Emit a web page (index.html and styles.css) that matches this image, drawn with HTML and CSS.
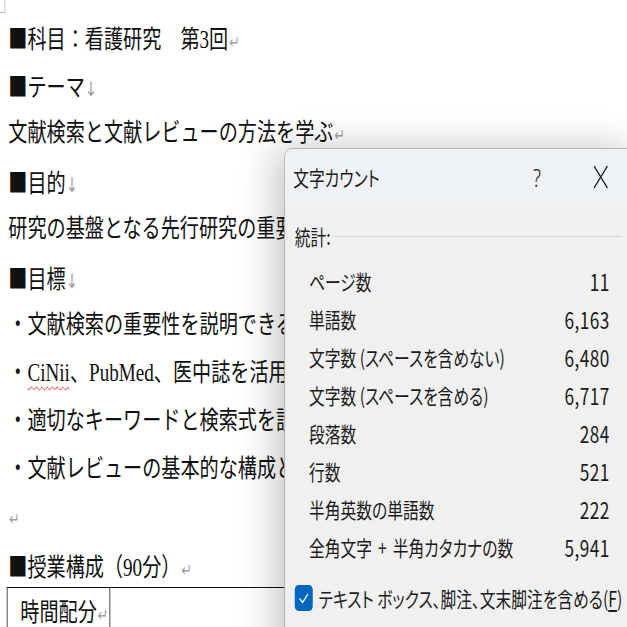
FILE: index.html
```html
<!DOCTYPE html>
<html lang="ja">
<head>
<meta charset="utf-8">
<title>文字カウント</title>
<link rel="stylesheet" href="styles.css">
</head>
<body>
<div class="stage">
  <div class="doc">
    <div class="corner"></div>
    <p class="line"><span class="sq">■</span>科目：看護研究　第<span class="lat">3</span>回<span class="ret">↵</span></p>
    <p class="line"><span class="sq">■</span>テーマ<span class="brk">↓</span></p>
    <p class="line">文献検索と文献レビューの方法を学ぶ<span class="ret">↵</span></p>
    <p class="line"><span class="sq">■</span>目的<span class="brk">↓</span></p>
    <p class="line">研究の基盤となる先行研究の重要性を理解し、文献検索の方法を学ぶ<span class="ret">↵</span></p>
    <p class="line"><span class="sq">■</span>目標<span class="brk">↓</span></p>
    <p class="line">・文献検索の重要性を説明できる<span class="ret">↵</span></p>
    <p class="line">・<span class="lat spell">CiNii</span>、<span class="lat">PubMed</span>、医中誌を活用して文献を検索できる<span class="ret">↵</span></p>
    <p class="line">・適切なキーワードと検索式を設定できる<span class="ret">↵</span></p>
    <p class="line">・文献レビューの基本的な構成と書き方を理解する<span class="ret">↵</span></p>
    <p class="line"><span class="ret">↵</span></p>
    <p class="line"><span class="sq">■</span>授業構成（<span class="lat">90</span>分）<span class="ret">↵</span></p>
    <table class="tbl">
      <tr><td class="c1">時間配分<span class="ret">↵</span></td><td class="c2"></td></tr>
    </table>
  </div>

  <div class="dialog">
    <div class="titlebar">
      <span class="title">文字カウント</span>
      <span class="btn help">?</span>
      <span class="btn close">
        <svg width="20" height="24" viewBox="0 0 20 24"><path d="M1 1 L19 23 M19 1 L1 23" stroke="#1b1b1b" stroke-width="1.5" fill="none"/></svg>
      </span>
    </div>
    <div class="body">
      <div class="stat-head"><span>統計:</span><span class="rule"></span></div>
      <div class="rows">
        <div class="row"><span>ページ数</span><span class="num">11</span></div>
        <div class="row"><span>単語数</span><span class="num">6,163</span></div>
        <div class="row"><span>文字数 (スペースを含めない)</span><span class="num">6,480</span></div>
        <div class="row"><span>文字数 (スペースを含める)</span><span class="num">6,717</span></div>
        <div class="row"><span>段落数</span><span class="num">284</span></div>
        <div class="row"><span>行数</span><span class="num">521</span></div>
        <div class="row"><span>半角英数の単語数</span><span class="num">222</span></div>
        <div class="row"><span>全角文字<span class="plus">+</span>半角カタカナの数</span><span class="num">5,941</span></div>
      </div>
      <div class="check-row">
        <span class="checkbox">
          <svg width="24" height="26" viewBox="0 0 24 26"><path d="M6.5 13.5 L10.5 17.5 L17.5 9" stroke="#fff" stroke-width="1.6" fill="none"/></svg>
        </span>
        <span>テキスト ボックス、脚注、文末脚注を含める(<u>F</u>)</span>
      </div>
    </div>
  </div>
</div>
</body>
</html>
```

FILE: styles.css
```css
html, body {
  margin: 0;
  padding: 0;
  overflow: hidden;
  background: #ffffff;
}

.stage {
  position: relative;
  width: 836px;
  height: 627px;
  overflow: hidden;
  transform: scaleX(0.75);
  transform-origin: 0 0;
  background: #ffffff;
}

.doc {
  padding-left: 11px;
  font-family: "Liberation Serif", "Noto Sans CJK JP", serif;
  font-size: 25.5px;
  color: #111111;
}

.corner {
  width: 6px;
  height: 12px;
  margin-left: -11px;
  border-right: 1px solid #b8b8b8;
  border-bottom: 1px solid #b8b8b8;
}

.line {
  margin: 0;
  height: 48px;
  line-height: 48px;
  white-space: nowrap;
}

.sq {
  font-family: "Noto Sans CJK JP", sans-serif;
}

.lat {
  font-family: "Liberation Serif", serif;
}

.spell {
  text-decoration: underline wavy #e02020;
  text-decoration-thickness: 1px;
  text-underline-offset: 5px;
}

.ret {
  font-family: "DejaVu Sans", sans-serif;
  font-size: 17px;
  color: #a0a0a0;
  margin-left: 1px;
}

.brk {
  font-family: "DejaVu Sans", sans-serif;
  font-size: 20px;
  color: #a0a0a0;
}

.tbl {
  margin: -2px 0 0 -2px;
  border-collapse: collapse;
}

.tbl td {
  border: 1px solid #111111;
  vertical-align: top;
  padding: 7px 0 20px 17px;
  line-height: 36px;
  white-space: nowrap;
}

.tbl .c1 {
  width: 119px;
}

.tbl .c2 {
  width: 500px;
}

/* dialog */
.dialog {
  position: absolute;
  left: 379px;
  top: 148px;
  width: 467px;
  height: 520px;
  z-index: 2;
  background: #f0f0f0;
  border: 1px solid #b0b0b0;
  border-radius: 10px;
  box-shadow: -10px 0 44px rgba(0, 0, 0, 0.24);
  font-family: "Noto Sans CJK JP", sans-serif;
  font-feature-settings: "palt";
  color: #1b1b1b;
  overflow: hidden;
}

.titlebar {
  height: 56px;
  display: flex;
  align-items: center;
  padding-left: 11px;
  background: #eef2f5;
  font-size: 21px;
}

.title {
  flex: 1;
}

.btn {
  display: flex;
  align-items: center;
  justify-content: center;
  width: 40px;
  height: 40px;
}

.help {
  font-family: "Noto Sans", sans-serif;
  font-weight: 300;
  font-size: 25px;
  margin-right: 45px;
}

.close {
  margin-right: 26px;
}

.body {
  padding: 12px 17px 0 13px;
  font-size: 21px;
}

.stat-head {
  display: flex;
  align-items: center;
  height: 38px;
}

.rule {
  flex: 1;
  margin-left: 5px;
  border-top: 1px solid #d3d3d3;
}

.rows {
  margin-top: 7px;
  padding: 0 17px 0 19px;
}

.row {
  display: flex;
  justify-content: space-between;
  align-items: center;
  height: 38px;
  white-space: nowrap;
}

.plus {
  margin: 0 8px;
}

.num {
  font-size: 23px;
  letter-spacing: 0.6px;
}

.check-row {
  margin-top: 13px;
  height: 38px;
  display: flex;
  align-items: center;
  gap: 8px;
  white-space: nowrap;
}

.checkbox {
  display: flex;
  width: 24px;
  height: 26px;
  border-radius: 5px;
  background: #0067c0;
}

.check-row u {
  text-underline-offset: 3px;
}
```
